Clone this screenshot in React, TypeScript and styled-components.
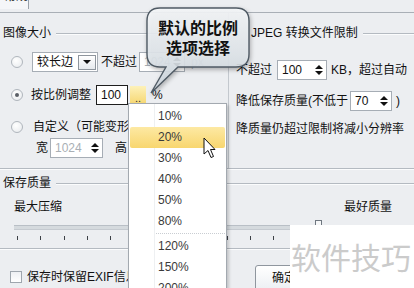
import React from 'react'
import styled, { createGlobalStyle } from 'styled-components'

const GlobalStyle = createGlobalStyle`
  html, body { margin: 0; padding: 0; background: #eceef1; }
`

const Dialog = styled.div`
  position: relative;
  width: 414px;
  height: 288px;
  overflow: hidden;
  background: #eceef1;
  font-family: "Liberation Sans", "Noto Sans CJK SC", sans-serif;
  font-size: 12px;
  color: #111;
  display: flex;
  flex-direction: column;
`

const TabStrip = styled.div`
  height: 12px;
  flex: none;
  display: flex;
  border-bottom: 1px solid #a9afb6;
`

const Tab = styled.div`
  width: 28px;
  height: 9px;
  overflow: hidden;
  background: #f5f6f8;
  border-right: 1px solid #9aa1a9;
  span {
    display: block;
    margin-top: -11px;
    padding-left: 4px;
    line-height: 14px;
  }
`

const TopSection = styled.div`
  height: 155px;
  flex: none;
  display: grid;
  grid-template-columns: 228px 1fr;
`

const Panel = styled.div<{ $side: 'left' | 'right' }>`
  display: flex;
  flex-direction: column;
  padding: ${p => (p.$side === 'left' ? '0 6px 0 3px' : '0 0 0 7px')};
  border-left: ${p => (p.$side === 'right' ? '1px solid #c3c8ce' : 'none')};
`

const Legend = styled.div<{ $top: number; $indent?: number }>`
  display: flex;
  align-items: center;
  gap: 5px;
  height: 14px;
  line-height: 14px;
  margin-top: ${p => p.$top}px;
  padding-left: ${p => p.$indent ?? 0}px;
  white-space: nowrap;
  &::after {
    content: '';
    flex: 1;
    height: 1px;
    background: #b4bac1;
    box-shadow: 0 1px 0 #fbfcfd;
  }
`

const Row = styled.div<{ $top: number; $indent?: number }>`
  display: flex;
  align-items: center;
  height: 20px;
  line-height: 14px;
  margin-top: ${p => p.$top}px;
  padding-left: ${p => p.$indent ?? 0}px;
  white-space: nowrap;
`

const Gap = styled.span<{ $w: number }>`
  display: inline-block;
  width: ${p => p.$w}px;
  flex: none;
`

const Dim = styled.span`
  color: #a9afb5;
`

const Radio = styled.span<{ $checked?: boolean }>`
  width: 12px;
  height: 12px;
  box-sizing: border-box;
  border-radius: 50%;
  border: 1px solid #b0b6bd;
  background: radial-gradient(circle at 40% 35%, #ffffff 0%, #e6e9ec 100%);
  flex: none;
  display: flex;
  align-items: center;
  justify-content: center;
  &::after {
    content: '';
    width: 4px;
    height: 4px;
    border-radius: 50%;
    background: ${p => (p.$checked ? '#5a5f66' : 'transparent')};
  }
`

const Select = styled.div`
  display: flex;
  align-items: center;
  justify-content: space-between;
  width: 66px;
  height: 20px;
  box-sizing: border-box;
  border: 1px solid #a6adb5;
  background: #fff;
  padding: 0 1px 0 4px;
`

const SelectArrow = styled.span`
  width: 18px;
  height: 15px;
  box-sizing: border-box;
  border: 1px solid #8e959d;
  background: linear-gradient(#ffffff, #e6e9ed);
  display: flex;
  align-items: center;
  justify-content: center;
  &::after {
    content: '';
    border-left: 4px solid transparent;
    border-right: 4px solid transparent;
    border-top: 4px solid #111;
  }
`

const Field = styled.div<{ $w: number; $focus?: boolean; $dim?: boolean }>`
  display: flex;
  align-items: center;
  justify-content: space-between;
  width: ${p => p.$w}px;
  height: 20px;
  box-sizing: border-box;
  border: 1px solid ${p => (p.$focus ? '#1e1e1e' : '#a6adb5')};
  background: #fff;
  padding: 0 3px 0 4px;
  color: ${p => (p.$dim ? '#a9afb5' : '#111')};
  flex: none;
`

const Spin = styled.span`
  display: flex;
  flex-direction: column;
  align-items: center;
  gap: 2px;
  &::before {
    content: '';
    border-left: 4px solid transparent;
    border-right: 4px solid transparent;
    border-bottom: 4px solid #111;
  }
  &::after {
    content: '';
    border-left: 4px solid transparent;
    border-right: 4px solid transparent;
    border-top: 4px solid #111;
  }
`

const MoreButton = styled.span`
  width: 16px;
  height: 18px;
  flex: none;
  background: linear-gradient(#fdf1b9, #f6d772);
  display: flex;
  align-items: flex-end;
  justify-content: center;
  line-height: 12px;
  font-size: 11px;
  color: #333;
`

const Divider = styled.div`
  height: 1px;
  flex: none;
  background: #b4bac1;
  border-bottom: 1px solid #fbfcfd;
`

const QualitySection = styled.div`
  height: 78px;
  flex: none;
  display: flex;
  flex-direction: column;
  padding-left: 3px;
`

const ScaleLabels = styled.div`
  display: flex;
  justify-content: space-between;
  height: 14px;
  line-height: 14px;
  margin-top: 10px;
  padding: 0 22px 0 11px;
`

const Track = styled.div`
  position: relative;
  height: 5px;
  margin: 11px 14px 0 11px;
  box-sizing: border-box;
  background: #d5dade;
  border-top: 1px solid #b9bfc6;
  border-bottom: 1px solid #c5cad0;
`

const Thumb = styled.span`
  position: absolute;
  top: -6px;
  width: 7px;
  height: 11px;
  box-sizing: border-box;
  border: 1px solid #6f7780;
  background: #f6f7f8;
`

const Ticks = styled.div`
  display: flex;
  justify-content: space-between;
  width: 374px;
  height: 4px;
  margin: 6px 0 0 14px;
  span {
    width: 1px;
    height: 4px;
    background: #3c4046;
  }
`

const BottomSection = styled.div`
  flex: 1;
  display: grid;
  grid-template-columns: 255px 80px;
  align-items: start;
`

const CheckRow = styled.label`
  display: flex;
  align-items: center;
  height: 14px;
  line-height: 14px;
  margin-top: 20px;
  padding-left: 10px;
  white-space: nowrap;
`

const Checkbox = styled.span`
  width: 12px;
  height: 12px;
  box-sizing: border-box;
  border: 1px solid #9fa6ae;
  background: linear-gradient(#eef0f3, #ffffff);
  margin-right: 5px;
  flex: none;
`

const Button = styled.div`
  margin-top: 15px;
  width: 76px;
  height: 26px;
  box-sizing: border-box;
  border: 1px solid #8f969e;
  border-radius: 3px;
  background: linear-gradient(#ffffff, #eceff3);
  padding-left: 16px;
  line-height: 24px;
`

const Menu = styled.div`
  position: absolute;
  left: 128px;
  top: 103px;
  width: 99px;
  height: 200px;
  box-sizing: border-box;
  padding: 2px 1px;
  border: 1px solid #a3a9b0;
  background: linear-gradient(to right, #fff 25px, #eef0f2 25px, #eef0f2 26px, #fff 26px);
  box-shadow: 2px 2px 3px rgba(0, 0, 0, 0.18);
`

const MenuItem = styled.div<{ $active?: boolean }>`
  height: 21px;
  box-sizing: border-box;
  line-height: 21px;
  padding-left: 28px;
  color: #3a3a3a;
  border-radius: 2px;
  background: ${p => (p.$active ? 'linear-gradient(#fde9a3, #f8d66f)' : 'transparent')};
`

const MenuSeparator = styled.div`
  height: 3px;
  margin-left: 26px;
  border-top: 1px dotted #c9cdd2;
  box-sizing: border-box;
  margin-top: 1px;
`

const Callout = styled.div`
  position: absolute;
  left: 145px;
  top: 5px;
  width: 108px;
  height: 92px;
  svg {
    position: absolute;
    inset: 0;
    filter: drop-shadow(1px 2px 2px rgba(0, 0, 0, 0.3));
  }
`

const CalloutLine = styled.div`
  position: relative;
  width: 102px;
  margin-left: 2px;
  height: 20px;
  text-align: center;
  font-size: 16px;
  font-weight: bold;
  line-height: 20px;
  color: #111;
  font-family: "Noto Sans CJK SC", sans-serif;
  &:first-of-type {
    margin-top: 12px;
  }
`

const Watermark = styled.div`
  position: absolute;
  left: 290px;
  top: 225px;
  width: 124px;
  height: 63px;
  background: #fff;
  color: #cbcbcb;
  font-family: "Noto Sans CJK SC", sans-serif;
  font-size: 30px;
  line-height: 44px;
  padding: 9px 0 0 1px;
  box-sizing: border-box;
  white-space: nowrap;
`

const Cursor = styled.svg`
  position: absolute;
  left: 203px;
  top: 137px;
`

const ratios = ['10%', '20%', '30%', '40%', '50%', '80%', '-', '120%', '150%', '200%']
const quality = 78

const App: React.FC = () => {
  return (
    <Dialog>
      <GlobalStyle />
      <TabStrip>
        <Tab><span>常规</span></Tab>
      </TabStrip>

      <TopSection>
        <Panel $side='left'>
          <Legend $top={13}>图像大小</Legend>
          <Row $top={12} $indent={8}>
            <Radio />
            <Gap $w={9} />
            <Select>
              较长边
              <SelectArrow />
            </Select>
            <Gap $w={3} />
            不超过
            <Gap $w={2} />
            <Field $w={46} $dim>1024<Spin /></Field>
            <Gap $w={6} />
            <Dim>px</Dim>
          </Row>
          <Row $top={13} $indent={8}>
            <Radio $checked />
            <Gap $w={8} />
            按比例调整
            <Gap $w={5} />
            <Field $w={32} $focus>100</Field>
            <Gap $w={2} />
            <MoreButton>..</MoreButton>
            <Gap $w={6} />
            %
          </Row>
          <Row $top={12} $indent={8}>
            <Radio />
            <Gap $w={10} />
            自定义（可能变形）
          </Row>
          <Row $top={1} $indent={33}>
            宽
            <Gap $w={2} />
            <Field $w={53} $dim>1024<Spin /></Field>
            <Gap $w={12} />
            高
          </Row>
        </Panel>

        <Panel $side='right'>
          <Legend $top={13} $indent={15}>JPEG 转换文件限制</Legend>
          <Row $top={20}>
            不超过
            <Gap $w={5} />
            <Field $w={50}>100<Spin /></Field>
            <Gap $w={4} />
            KB，超过自动
          </Row>
          <Row $top={11}>
            降低保存质量(不低于
            <Gap $w={2} />
            <Field $w={42}>70<Spin /></Field>
            <Gap $w={4} />
            )
          </Row>
          <Row $top={8}>降质量仍超过限制将减小分辨率</Row>
        </Panel>
      </TopSection>

      <Divider />

      <QualitySection>
        <Legend $top={6}>保存质量</Legend>
        <ScaleLabels>
          <span>最大压缩</span>
          <span>最好质量</span>
        </ScaleLabels>
        <Track>
          <Thumb style={{ left: `${quality}%` }} />
        </Track>
        <Ticks>
          {Array.from({ length: 17 }, (_, i) => <span key={i} />)}
        </Ticks>
      </QualitySection>

      <Divider />

      <BottomSection>
        <CheckRow>
          <Checkbox />
          保存时保留EXIF信息
        </CheckRow>
        <Button>确定</Button>
      </BottomSection>

      <Menu>
        {ratios.map((r, i) =>
          r === '-' ? <MenuSeparator key={i} /> : <MenuItem key={i} $active={r === '20%'}>{r}</MenuItem>
        )}
      </Menu>

      <Callout>
        <svg width='108' height='92' viewBox='0 0 108 92'>
          <defs>
            <linearGradient id='bubble' x1='0' y1='0' x2='0' y2='1'>
              <stop offset='0' stopColor='#f7f9fb' />
              <stop offset='0.55' stopColor='#e2e8ed' />
              <stop offset='1' stopColor='#c9d2da' />
            </linearGradient>
          </defs>
          <path
            d='M15,3 H91 Q104,3 104,16 V49 Q104,62 91,62 H33 L6,88 L21,62 H15 Q2,62 2,49 V16 Q2,3 15,3 Z'
            fill='url(#bubble)'
            fillOpacity='0.9'
            stroke='#4f5a64'
            strokeWidth='1.4'
          />
        </svg>
        <CalloutLine>默认的比例</CalloutLine>
        <CalloutLine>选项选择</CalloutLine>
      </Callout>

      <Cursor width='14' height='22' viewBox='0 0 14 22'>
        <path d='M1,1 L1,17 L5,13.5 L8,20.5 L10.5,19.5 L7.5,12.5 L12,12.5 Z' fill='#fff' stroke='#111' strokeWidth='1' />
      </Cursor>

      <Watermark>软件技巧</Watermark>
    </Dialog>
  )
}

export default App
